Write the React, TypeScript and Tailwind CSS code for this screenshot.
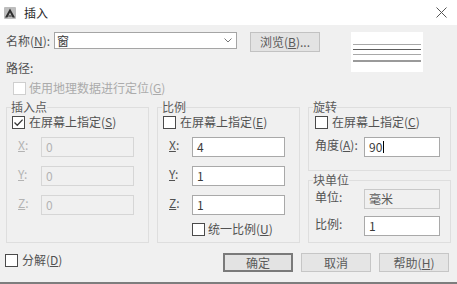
import type { ReactNode } from "react";

function AppIcon() {
  return (
    <svg width="12" height="12" viewBox="0 0 12 12">
      <rect x="0" y="0" width="12" height="12" rx="1" fill="#bdbdbd" />
      <path d="M6 1.5 L11 10.5 H8.6 L6 5.4 L3.4 10.5 H1 Z" fill="#2f2f2f" />
      <path d="M4.6 8.6 H7.4 L7.9 9.6 H4.1 Z" fill="#2f2f2f" />
    </svg>
  );
}

function Check({ checked, disabled }: { checked?: boolean; disabled?: boolean }) {
  return (
    <span
      className={
        disabled
          ? "flex h-[13px] w-[13px] shrink-0 items-center justify-center border border-[#cfcfcf] bg-white"
          : "flex h-[13px] w-[13px] shrink-0 items-center justify-center border border-[#4a4a4a] bg-white"
      }
    >
      {checked && (
        <svg width="11" height="11" viewBox="0 0 11 11">
          <path d="M1.5 5.5 L4.3 8.3 L9.6 2.6" fill="none" stroke="#3a3a3a" strokeWidth="1.3" />
        </svg>
      )}
    </span>
  );
}

function Field({
  value,
  width,
  disabled,
  readOnly,
  caret,
}: {
  value: string;
  width: string;
  disabled?: boolean;
  readOnly?: boolean;
  caret?: boolean;
}) {
  const tone = disabled
    ? "border-[#d6d6d6] bg-[#f0f0f0] text-[#b3b3b3]"
    : readOnly
      ? "border-[#c9c9c9] bg-[#f0f0f0] text-[#5a5a5a]"
      : "border-[#a9a9a9] bg-white text-[#3a3a3a]";
  return (
    <div className={`flex h-[20px] shrink-0 items-center border pl-[4px] ${width} ${tone}`}>
      <span>{value}</span>
      {caret && <span className="ml-[1px] h-[12px] w-px bg-black" />}
    </div>
  );
}

function Group({
  title,
  className,
  children,
}: {
  title: string;
  className: string;
  children: ReactNode;
}) {
  return (
    <fieldset className={`min-w-0 border border-[#dedede] p-0 ${className}`}>
      <legend className="ml-[4px] p-0 text-[12px] leading-[14px] text-[#5a5a5a]">{title}</legend>
      {children}
    </fieldset>
  );
}

function Axis({ axis, value, disabled }: { axis: string; value: string; disabled?: boolean }) {
  return (
    <div className="flex items-start">
      <span
        className={
          disabled
            ? "w-[34px] pl-[11px] leading-[16px] text-[#b3b3b3]"
            : "w-[34px] pl-[11px] leading-[16px] text-[#525252]"
        }
      >
        <u>{axis}</u>:
      </span>
      <Field value={value} width="w-[93px]" disabled={disabled} />
    </div>
  );
}

function Btn({ children, main }: { children: ReactNode; main?: boolean }) {
  return (
    <button
      className={
        main
          ? "flex h-[19px] w-[70px] items-center justify-center border-2 border-[#7a7a7a] bg-[#e3e3e3] text-[#5a5a5a]"
          : "flex h-[19px] w-[70px] items-center justify-center border border-[#c6c6c6] bg-[#e5e5e5] text-[#5a5a5a]"
      }
    >
      {children}
    </button>
  );
}

export default function App() {
  return (
    <div className="flex h-[284px] w-[457px] flex-col overflow-hidden border-b-2 border-[#7d7d7d] bg-[#f0f0f0] font-['Noto_Sans_CJK_SC',sans-serif] text-[12px] leading-[16px] text-[#525252]">
      <header className="flex h-[25px] shrink-0 items-center bg-white pl-[4px] pr-[10px]">
        <AppIcon />
        <span className="ml-[8px] text-[12px] text-[#2a2a2a]">插入</span>
        <svg className="ml-auto" width="11" height="11" viewBox="0 0 11 11">
          <path d="M0.5 0.5 L10.5 10.5 M10.5 0.5 L0.5 10.5" stroke="#555" strokeWidth="1" />
        </svg>
      </header>

      <div className="flex pt-[7px]">
        <div className="flex w-[351px] flex-col pl-[6px]">
          <div className="flex items-start">
            <label className="flex h-[17px] w-[48px] items-center">
              名称(<u>N</u>):
            </label>
            <div className="flex h-[17px] w-[183px] items-center border border-[#a5a5a5] bg-white pl-[2px] pr-[4px] text-[#3a3a3a]">
              <span>窗</span>
              <svg className="ml-auto" width="8" height="5" viewBox="0 0 8 5">
                <path d="M0.5 0.5 L4 4 L7.5 0.5" fill="none" stroke="#777" strokeWidth="1" />
              </svg>
            </div>
            <button className="ml-[13px] flex h-[20px] w-[70px] items-center justify-center border border-[#c2c2c2] bg-[#e3e3e3] text-[#5a5a5a]">
              浏览(<u>B</u>)...
            </button>
          </div>
          <div className="mt-[8px]">路径:</div>
          <div className="mt-[4px] flex items-center gap-[3px] pl-[7px] text-[#ababab]">
            <Check disabled />
            <span>使用地理数据进行定位(<u>G</u>)</span>
          </div>
        </div>
        <div className="flex h-[40px] w-[72px] flex-col bg-white px-[2px] pt-[12px]">
          <div className="h-px bg-[#a8a8a8]" />
          <div className="mt-[4px] h-px bg-[#5e5e5e]" />
          <div className="mt-[4px] h-px bg-[#a8a8a8]" />
          <div className="mt-[5px] h-[2px] bg-[#9a9a9a]" />
        </div>
      </div>

      <div className="mt-[4px] flex gap-[8px] pl-[6px]">
        <Group title="插入点" className="h-[143px] w-[143px]">
          <div className="flex items-center gap-[4px] pl-[5px]">
            <Check checked />
            <span>
              在屏幕上指定(<u>S</u>)
            </span>
          </div>
          <div className="mt-[7px] flex flex-col gap-[9px]">
            <Axis axis="X" value="0" disabled />
            <Axis axis="Y" value="0" disabled />
            <Axis axis="Z" value="0" disabled />
          </div>
        </Group>

        <Group title="比例" className="h-[143px] w-[143px]">
          <div className="flex items-center gap-[4px] pl-[5px]">
            <Check />
            <span>
              在屏幕上指定(<u>E</u>)
            </span>
          </div>
          <div className="mt-[7px] flex flex-col gap-[9px]">
            <Axis axis="X" value="4" />
            <Axis axis="Y" value="1" />
            <Axis axis="Z" value="1" />
          </div>
          <div className="mt-[6px] flex items-center gap-[3px] pl-[34px]">
            <Check />
            <span>
              统一比例(<u>U</u>)
            </span>
          </div>
        </Group>

        <div className="flex w-[143px] flex-col gap-[2px]">
          <Group title="旋转" className="h-[71px] w-[143px]">
            <div className="flex items-center gap-[4px] pl-[6px]">
              <Check />
              <span>
                在屏幕上指定(<u>C</u>)
              </span>
            </div>
            <div className="mt-[7px] flex items-start">
              <span className="w-[55px] pl-[6px]">
                角度(<u>A</u>):
              </span>
              <Field value="90" width="w-[76px]" caret />
            </div>
          </Group>
          <Group title="块单位" className="h-[70px] w-[143px]">
            <div className="mt-[2px] flex flex-col gap-[7px]">
              <div className="flex items-start">
                <span className="w-[55px] pl-[6px]">单位:</span>
                <Field value="毫米" width="w-[76px]" readOnly />
              </div>
              <div className="flex items-start">
                <span className="w-[55px] pl-[6px]">比例:</span>
                <Field value="1" width="w-[76px]" />
              </div>
            </div>
          </Group>
        </div>
      </div>

      <div className="mt-[10px] flex items-start pl-[5px] pr-[8px]">
        <div className="-mt-[1px] flex items-center gap-[4px]">
          <Check />
          <span>
            分解(<u>D</u>)
          </span>
        </div>
        <div className="ml-auto flex gap-[8px]">
          <Btn main>确定</Btn>
          <Btn>取消</Btn>
          <Btn>
            帮助(<u>H</u>)
          </Btn>
        </div>
      </div>
    </div>
  );
}
